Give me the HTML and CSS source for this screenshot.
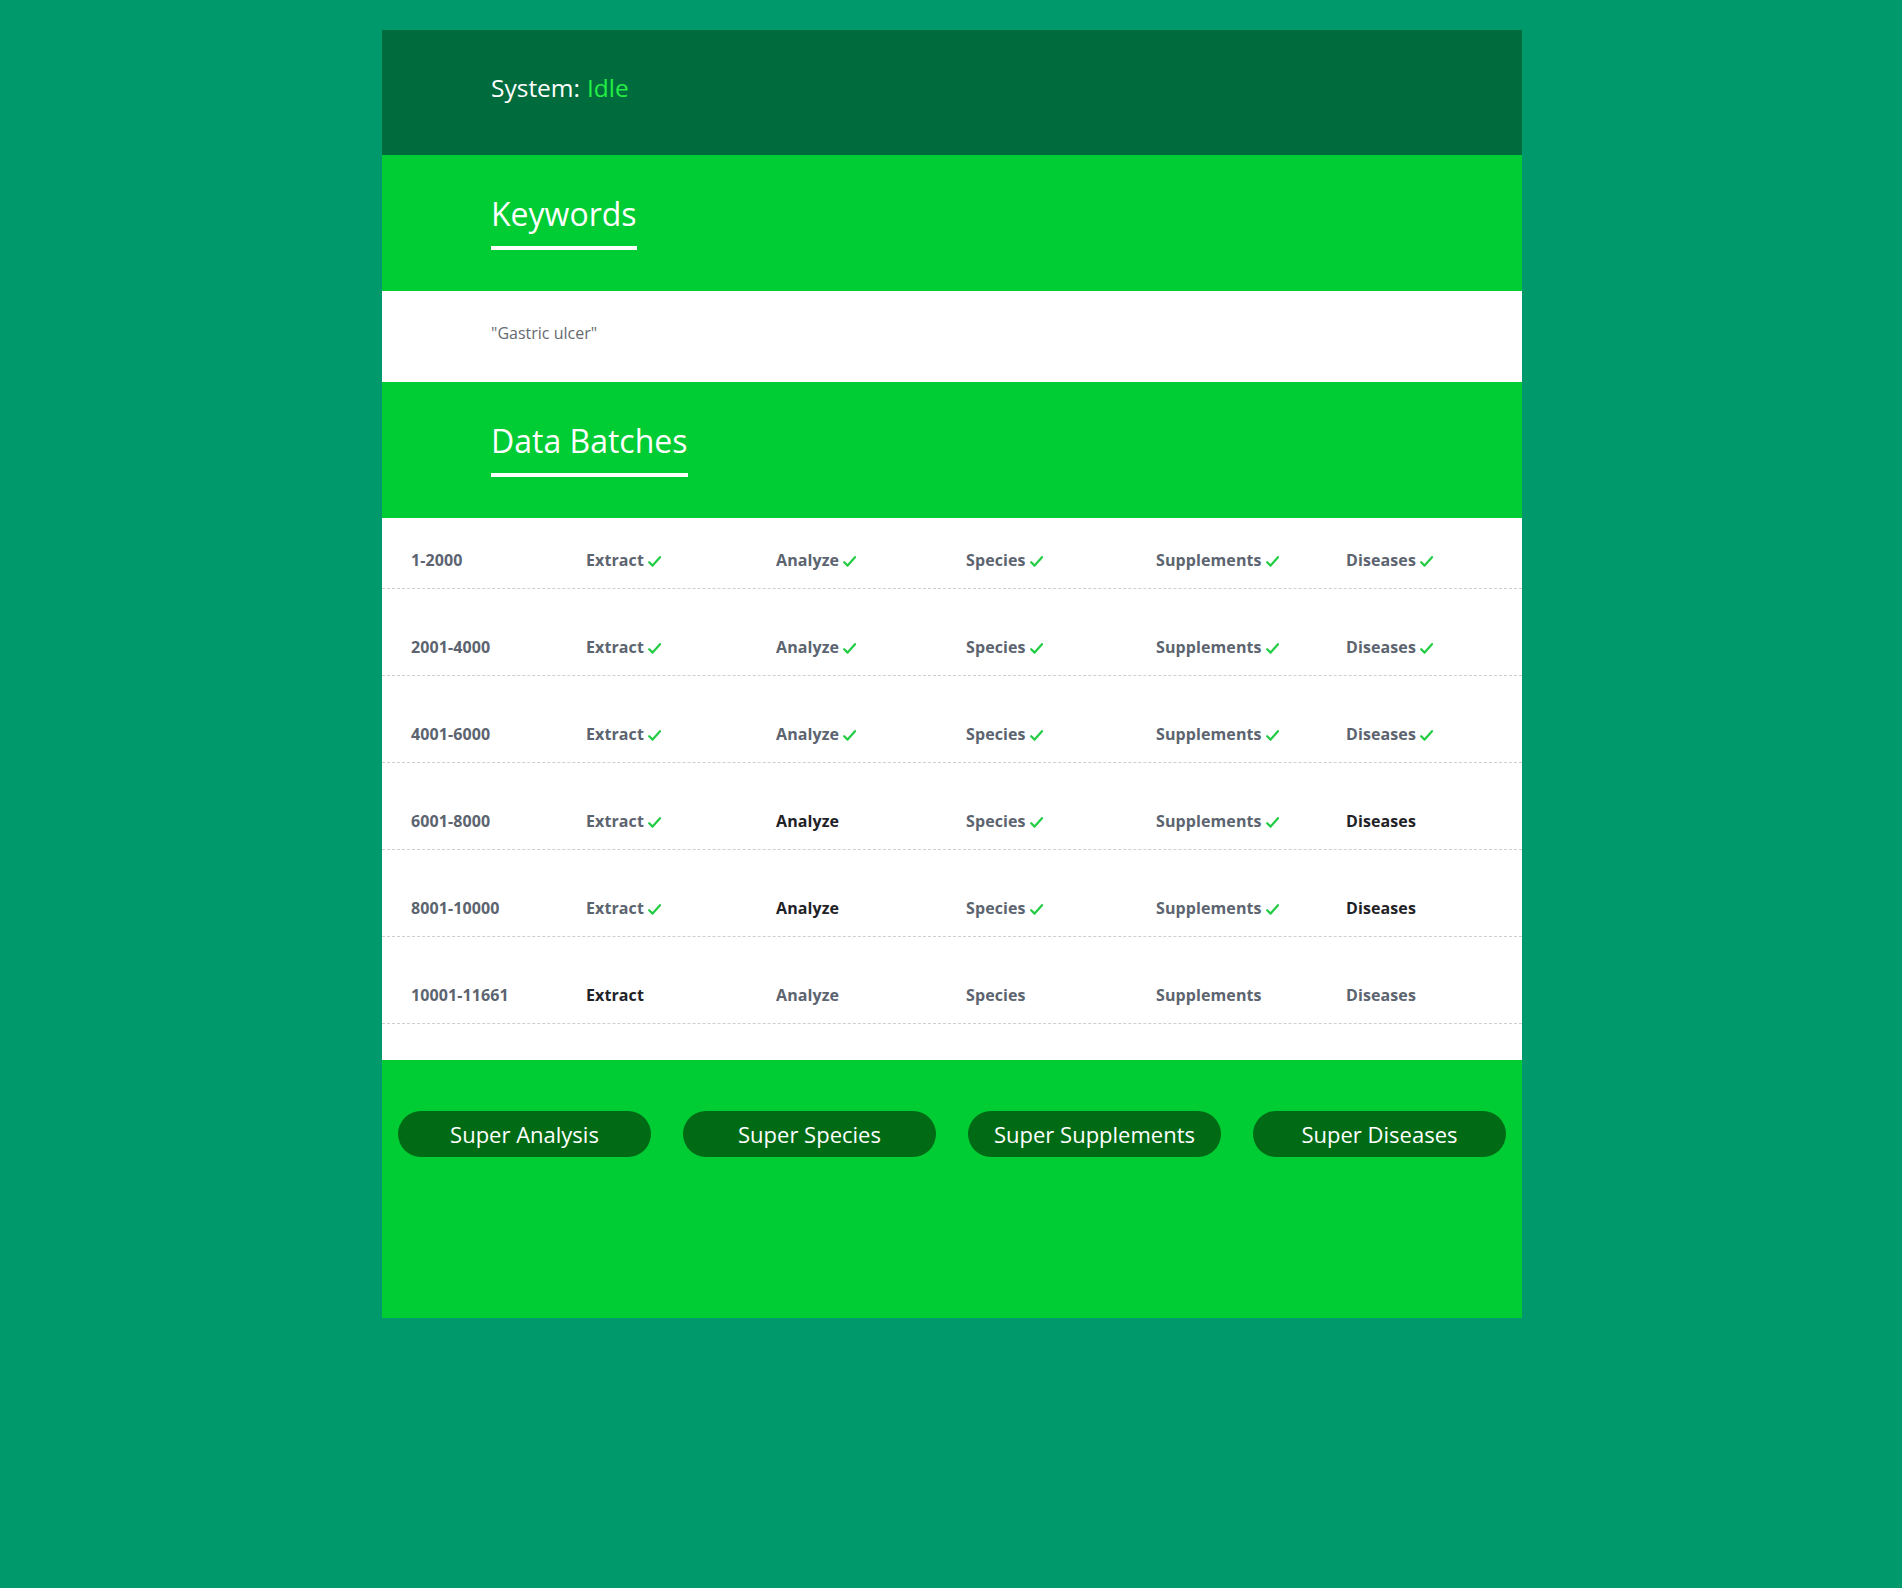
FILE: index.html
```html
<!DOCTYPE html>
<html lang="en">
<head>
<meta charset="utf-8">
<title>Data Batches</title>
<link rel="stylesheet" href="styles.css">
</head>
<body>
<div class="app">
  <header class="status-bar">
    <span class="status-label">System:</span> <span class="status-value">Idle</span>
  </header>

  <section class="section-head">
    <h2 class="section-title">Keywords</h2>
  </section>
  <div class="keywords">"Gastric ulcer"</div>

  <section class="section-head">
    <h2 class="section-title">Data Batches</h2>
  </section>
  <div class="batches">
    <div class="batch-row">
      <div class="cell range">1-2000</div>
      <div class="cell done">Extract<svg class="tick" viewBox="0 0 13 11"><path d="M1.2 6.2 L4.6 9.6 L12 1.2"/></svg></div>
      <div class="cell done">Analyze<svg class="tick" viewBox="0 0 13 11"><path d="M1.2 6.2 L4.6 9.6 L12 1.2"/></svg></div>
      <div class="cell done">Species<svg class="tick" viewBox="0 0 13 11"><path d="M1.2 6.2 L4.6 9.6 L12 1.2"/></svg></div>
      <div class="cell done">Supplements<svg class="tick" viewBox="0 0 13 11"><path d="M1.2 6.2 L4.6 9.6 L12 1.2"/></svg></div>
      <div class="cell done">Diseases<svg class="tick" viewBox="0 0 13 11"><path d="M1.2 6.2 L4.6 9.6 L12 1.2"/></svg></div>
    </div>
    <div class="batch-row">
      <div class="cell range">2001-4000</div>
      <div class="cell done">Extract<svg class="tick" viewBox="0 0 13 11"><path d="M1.2 6.2 L4.6 9.6 L12 1.2"/></svg></div>
      <div class="cell done">Analyze<svg class="tick" viewBox="0 0 13 11"><path d="M1.2 6.2 L4.6 9.6 L12 1.2"/></svg></div>
      <div class="cell done">Species<svg class="tick" viewBox="0 0 13 11"><path d="M1.2 6.2 L4.6 9.6 L12 1.2"/></svg></div>
      <div class="cell done">Supplements<svg class="tick" viewBox="0 0 13 11"><path d="M1.2 6.2 L4.6 9.6 L12 1.2"/></svg></div>
      <div class="cell done">Diseases<svg class="tick" viewBox="0 0 13 11"><path d="M1.2 6.2 L4.6 9.6 L12 1.2"/></svg></div>
    </div>
    <div class="batch-row">
      <div class="cell range">4001-6000</div>
      <div class="cell done">Extract<svg class="tick" viewBox="0 0 13 11"><path d="M1.2 6.2 L4.6 9.6 L12 1.2"/></svg></div>
      <div class="cell done">Analyze<svg class="tick" viewBox="0 0 13 11"><path d="M1.2 6.2 L4.6 9.6 L12 1.2"/></svg></div>
      <div class="cell done">Species<svg class="tick" viewBox="0 0 13 11"><path d="M1.2 6.2 L4.6 9.6 L12 1.2"/></svg></div>
      <div class="cell done">Supplements<svg class="tick" viewBox="0 0 13 11"><path d="M1.2 6.2 L4.6 9.6 L12 1.2"/></svg></div>
      <div class="cell done">Diseases<svg class="tick" viewBox="0 0 13 11"><path d="M1.2 6.2 L4.6 9.6 L12 1.2"/></svg></div>
    </div>
    <div class="batch-row">
      <div class="cell range">6001-8000</div>
      <div class="cell done">Extract<svg class="tick" viewBox="0 0 13 11"><path d="M1.2 6.2 L4.6 9.6 L12 1.2"/></svg></div>
      <div class="cell active">Analyze</div>
      <div class="cell done">Species<svg class="tick" viewBox="0 0 13 11"><path d="M1.2 6.2 L4.6 9.6 L12 1.2"/></svg></div>
      <div class="cell done">Supplements<svg class="tick" viewBox="0 0 13 11"><path d="M1.2 6.2 L4.6 9.6 L12 1.2"/></svg></div>
      <div class="cell active">Diseases</div>
    </div>
    <div class="batch-row">
      <div class="cell range">8001-10000</div>
      <div class="cell done">Extract<svg class="tick" viewBox="0 0 13 11"><path d="M1.2 6.2 L4.6 9.6 L12 1.2"/></svg></div>
      <div class="cell active">Analyze</div>
      <div class="cell done">Species<svg class="tick" viewBox="0 0 13 11"><path d="M1.2 6.2 L4.6 9.6 L12 1.2"/></svg></div>
      <div class="cell done">Supplements<svg class="tick" viewBox="0 0 13 11"><path d="M1.2 6.2 L4.6 9.6 L12 1.2"/></svg></div>
      <div class="cell active">Diseases</div>
    </div>
    <div class="batch-row">
      <div class="cell range">10001-11661</div>
      <div class="cell active">Extract</div>
      <div class="cell">Analyze</div>
      <div class="cell">Species</div>
      <div class="cell">Supplements</div>
      <div class="cell">Diseases</div>
    </div>
  </div>

  <footer class="actions">
    <div class="action-cell"><button class="btn">Super Analysis</button></div>
    <div class="action-cell"><button class="btn">Super Species</button></div>
    <div class="action-cell"><button class="btn">Super Supplements</button></div>
    <div class="action-cell"><button class="btn">Super Diseases</button></div>
  </footer>
</div>
</body>
</html>
```

FILE: styles.css
```css
html, body {
  margin: 0;
  padding: 0;
}
body {
  background: #00996b;
  font-family: "Open Sans", "Noto Sans", "Liberation Sans", sans-serif;
  min-height: 1588px;
}
.app {
  width: 1140px;
  margin: 30px 0 0 calc(50% - 569px);
}
.status-bar {
  background: #006b3c;
  height: 125px;
  box-sizing: border-box;
  padding: 42px 109px 0;
  display: flex;
  align-items: flex-start;
  gap: 7px;
  color: #ffffff;
  font-size: 24.5px;
  line-height: 32px;
}
.status-value {
  color: #22ee44;
}
.section-head {
  background: #00cc33;
  height: 136px;
  box-sizing: border-box;
  padding: 36px 109px 0;
}
.section-title {
  display: inline-block;
  margin: 0;
  font-size: 32px;
  font-weight: 400;
  line-height: 45px;
  color: #ffffff;
  padding-bottom: 10px;
  border-bottom: 4px solid #ffffff;
}
.keywords {
  background: #ffffff;
  height: 91px;
  box-sizing: border-box;
  padding: 30px 109px 0;
  font-size: 16px;
  line-height: 24px;
  color: #666a70;
}
.batches {
  background: #ffffff;
  padding-bottom: 36px;
}
.batch-row {
  display: grid;
  grid-template-columns: repeat(6, 190px);
  height: 71px;
  box-sizing: border-box;
  padding-top: 30px;
  border-bottom: 1px dashed #cfcfcf;
  margin-top: 16px;
}
.batch-row:first-child {
  margin-top: 0;
}
.cell {
  padding-left: 14px;
  font-size: 16px;
  font-weight: 700;
  line-height: 24px;
  color: #5c6470;
  white-space: nowrap;
  letter-spacing: 0.1px;
}
.cell.range {
  padding-left: 29px;
}
.cell.active {
  color: #1f2328;
}
.tick {
  width: 13px;
  height: 11px;
  margin-left: 4px;
  vertical-align: -1px;
  fill: none;
  stroke: #22cc44;
  stroke-width: 2.2;
  stroke-linecap: round;
  stroke-linejoin: round;
}
.actions {
  background: #00cc33;
  height: 258px;
  box-sizing: border-box;
  padding-top: 51px;
  display: grid;
  grid-template-columns: repeat(4, 1fr);
  align-items: start;
}
.action-cell {
  padding: 0 16px;
}
.btn {
  display: block;
  width: 100%;
  height: 46px;
  border: none;
  border-radius: 23px;
  background: #006b14;
  color: #ffffff;
  font-family: "Open Sans", "Noto Sans", "Liberation Sans", sans-serif;
  font-size: 22px;
  line-height: 30px;
  padding: 0 8px;
  cursor: pointer;
}
```
